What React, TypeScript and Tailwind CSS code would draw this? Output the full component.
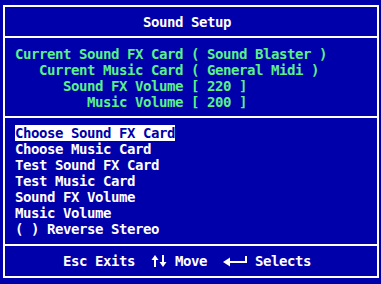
import React from "react"

const mono =
  "font-['DejaVu_Sans_Mono','Liberation_Mono',monospace] font-bold text-[14px] tracking-[-0.43px] leading-[16px] whitespace-pre"

const info = [
  "Current Sound FX Card ( Sound Blaster )",
  "   Current Music Card ( General Midi )",
  "      Sound FX Volume [ 220 ]",
  "         Music Volume [ 200 ]",
]

const items = [
  "Choose Sound FX Card",
  "Choose Music Card",
  "Test Sound FX Card",
  "Test Music Card",
  "Sound FX Volume",
  "Music Volume",
  "( ) Reverse Stereo",
]

function UpDown() {
  return (
    <svg width="16" height="16" viewBox="0 0 16 16" className="block">
      <polygon points="4,2 0.5,7 7.5,7" fill="white" />
      <rect x="3" y="6" width="2" height="8" fill="white" />
      <polygon points="12,14 8.5,9 15.5,9" fill="white" />
      <rect x="11" y="2" width="2" height="8" fill="white" />
    </svg>
  )
}

function EnterArrow() {
  return (
    <svg width="24" height="16" viewBox="0 0 24 16" className="block">
      <polygon points="0,9 7,4.5 7,13.5" fill="white" />
      <rect x="6" y="8" width="18" height="2" fill="white" />
      <rect x="22" y="3" width="2" height="7" fill="white" />
    </svg>
  )
}

export default function App() {
  return (
    <div className="w-[381px] h-[284px] bg-[#0000aa] pt-[5px] pl-[3px]">
      <div className="w-[376px] h-[273px] border-2 border-white flex flex-col text-white">
        {/* Title */}
        <div className="h-[29px] flex items-center justify-center">
          <span className={mono}>Sound Setup </span>
        </div>
        <div className="h-[2px] bg-white" />

        {/* Current settings */}
        <div className="h-[78px] pt-[8px] pl-[10px] text-[#5cf08a]">
          {info.map((line) => (
            <div key={line} className={mono}>
              {line}
            </div>
          ))}
        </div>
        <div className="h-[2px] bg-white" />

        {/* Menu */}
        <div className="h-[126px] pt-[7px] pl-[10px]">
          {items.map((item, i) => (
            <div key={item} className={mono}>
              <span className={i === 0 ? "bg-white text-[#0000aa]" : ""}>{item}</span>
            </div>
          ))}
        </div>
        <div className="h-[2px] bg-white" />

        {/* Footer */}
        <div className="h-[30px] flex items-center justify-center">
          <div className="flex items-center">
            <span className={mono}>Esc Exits  </span>
            <UpDown />
            <span className={mono}> Move  </span>
            <EnterArrow />
            <span className={mono}> Selects </span>
          </div>
        </div>
      </div>
    </div>
  )
}
